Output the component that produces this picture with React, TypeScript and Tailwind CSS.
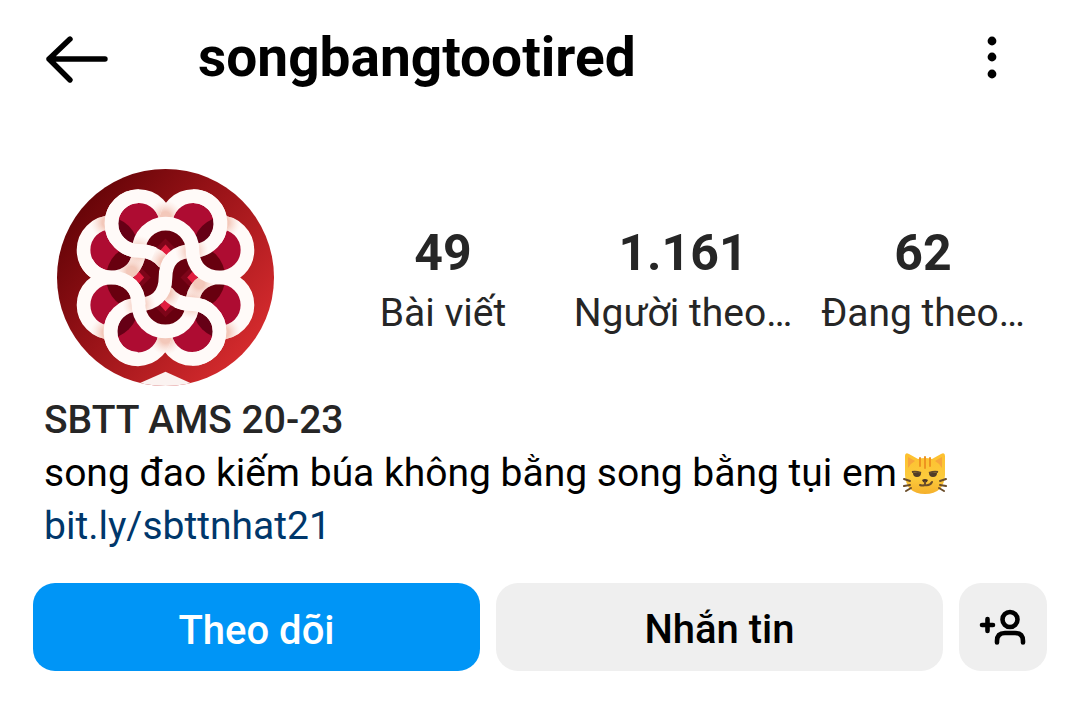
import { useId } from 'react';

type Point = [number, number];

const stats = [
  { value: '49', label: 'Bài viết', className: 'w-[192px]' },
  { value: '1.161', label: 'Người theo…', className: 'w-[216px]' },
  { value: '62', label: 'Đang theo…', className: 'w-[192px]' },
];

// outer lobe + S-curve pieces of the knot, the other half is the same rotated by 180deg
const SIDE = 'M349 190 A82 82 0 1 0 267 272 C298 272 325 283 345 310';
const SPINE =
  'M348 190 A82 82 0 1 1 430 272 C380 272 347 300 347 352 S314 433 264 433 A82 82 0 1 0 346 514';
const ARCH =
  'M184 517 A82 82 0 0 1 184 352 C235 352 267 318 267 271 A80.5 80.5 0 0 1 428 271 C428 318 459 352 510 352 A82 82 0 0 1 510 517';
const SIDE_OVER = 'M267 108 A82 82 0 0 0 267 272 C284 272 298 275 312 281';
const SPINE_OVER = 'M430 108 A82 82 0 0 1 497 237';
const HALF_TURN = 'rotate(180 347 352)';

function Strand({ d, shades = [], turned }: { d: string; shades?: Point[]; turned?: boolean }) {
  const id = useId();
  return (
    <g transform={turned ? HALF_TURN : undefined} fill="none" strokeWidth="41">
      <path d={d} stroke="#fffaf8" />
      {shades.map(([x, y], i) => (
        <g key={i}>
          <radialGradient id={`${id}${i}`} gradientUnits="userSpaceOnUse" cx={x} cy={y} r="50">
            <stop offset="0.3" stopColor="#f3c8ba" />
            <stop offset="1" stopColor="#fae3dc" stopOpacity="0" />
          </radialGradient>
          <path d={d} stroke={`url(#${id}${i})`} />
        </g>
      ))}
    </g>
  );
}

function KnotAvatar() {
  const lobes: Point[] = [
    [267, 190], [430, 190], [510, 270], [510, 435],
    [430, 515], [267, 515], [184, 435], [184, 270],
  ];
  const inner: Point[] = [[347, 271], [267, 352], [428, 352], [347, 435]];
  const overlaps: [Point, string][] = [
    [[165, 270], 'lobe0'],
    [[529, 270], 'lobe1'],
    [[529, 435], 'lobe4'],
    [[165, 435], 'lobe5'],
  ];
  return (
    <svg viewBox="22 27 650 650" className="size-[217px] shrink-0" role="img" aria-label="SBTT">
      <defs>
        <linearGradient id="backdrop" x1="0.1" y1="0.15" x2="0.9" y2="0.8">
          <stop offset="0" stopColor="#650407" />
          <stop offset="0.4" stopColor="#941116" />
          <stop offset="1" stopColor="#d32a2d" />
        </linearGradient>
        <clipPath id="round">
          <circle cx="347" cy="352" r="325" />
        </clipPath>
        {lobes.map(([x, y], i) => (
          <clipPath key={i} id={`lobe${i}`}>
            <circle cx={x} cy={y} r="80" />
          </clipPath>
        ))}
      </defs>
      <g clipPath="url(#round)">
        <rect x="22" y="27" width="650" height="650" fill="url(#backdrop)" />
        <path d="M262 672 L347 634 L430 672 V680 H262Z" fill="#fbf3f1" />
        {lobes.map(([x, y], i) => (
          <circle key={i} cx={x} cy={y} r="80" fill="#ae0c32" />
        ))}
        {overlaps.map(([[x, y], clip]) => (
          <circle key={clip} cx={x} cy={y} r="102" fill="#660016" clipPath={`url(#${clip})`} />
        ))}
        {inner.map(([x, y], i) => (
          <circle key={i} cx={x} cy={y} r="98" fill="#68000f" />
        ))}
        {inner.map(([x, y], i) => (
          <g key={i}>
            <path d={`M${x - 36} ${y} l36 -36 l36 36 l-36 36z`} fill="#7d0519" />
            <path d={`M${x - 16} ${y} l16 -18 l16 18 l-16 18z`} fill="#e01d3f" />
          </g>
        ))}

        <Strand d={SIDE} shades={[[347, 170], [346, 306]]} />
        <Strand d={SIDE} shades={[[347, 170], [346, 306]]} turned />
        <Strand d={SPINE} shades={[[347, 170], [426, 272], [268, 433], [347, 534]]} />
        <Strand d={ARCH} shades={[[172, 517], [522, 517], [266, 276], [246, 334]]} turned />
        <Strand d={ARCH} shades={[[172, 517], [522, 517], [266, 276], [246, 334]]} />
        {/* pieces that pass over the strands above */}
        <Strand d="M267 433 C267 386 235 352 184 352 A82 82 0 0 1 110 305" />
        <Strand d={SIDE_OVER} />
        <Strand d={SIDE_OVER} turned />
        <Strand d={SPINE_OVER} />
        <Strand d={SPINE_OVER} turned />
      </g>
    </svg>
  );
}

function CatEmoji() {
  return (
    <svg viewBox="0 0 46 42" className="h-[42px] w-[46px] shrink-0" role="img" aria-label="😼">
      <defs>
        <linearGradient id="fur" x1="0" y1="0" x2="0" y2="1">
          <stop offset="0" stopColor="#fdc02f" />
          <stop offset="0.6" stopColor="#fccb3c" />
          <stop offset="1" stopColor="#f5b02c" />
        </linearGradient>
      </defs>
      <path
        d="M3 3 Q3 -1 7 1 L16 6 Q23 4 30 6 L39 1 Q43 -1 43 3 L43 22 Q42 41 23 41 Q4 41 3 22Z"
        fill="url(#fur)"
      />
      <path d="M6 4 L13 8 Q9 10 6 15Z M40 4 L33 8 Q37 10 40 15Z" fill="#f7a53c" />
      <path d="M18 5 V13 M23 4 V15 M28 5 V13" stroke="#ee9420" strokeWidth="2" strokeLinecap="round" />
      <path d="M11 20 H19 Q19 24 15 24 Q11 24 11 20Z M27 20 H35 Q35 24 31 24 Q27 24 27 20Z" fill="#4f3c28" />
      <path d="M10 19 Q14 18 19 20 M36 19 Q32 18 27 20" fill="none" stroke="#5f482b" strokeWidth="2" />
      <path d="M20 27 Q23 25 26 27 Q25 30 23 30 Q21 30 20 27Z" fill="#4a3425" />
      <g fill="none" stroke="#6b4e2b" strokeLinecap="round">
        <path d="M23 29 V32 Q20 33 18 32 M23 32 Q28 33 30 29" strokeWidth="2" />
        <path
          d="M8 28 L2 26 M8 32 L2 33 M9 35 L4 38 M38 28 L44 26 M38 32 L44 33 M37 35 L42 38"
          strokeWidth="2"
        />
      </g>
    </svg>
  );
}

export default function App() {
  return (
    <main className="min-h-screen bg-white font-[Roboto,'Noto_Sans',sans-serif] text-black">
      <header className="flex h-[114px] items-center pr-[72px] pl-[44px]">
        <button type="button" aria-label="Quay lại" className="mr-[88px]">
          <svg viewBox="0 0 66 54" className="h-[54px] w-[66px]" fill="none" stroke="currentColor" strokeWidth="5.4" strokeLinecap="round" strokeLinejoin="round">
            <path d="M26 9 L5 29 L26 50 M5 29 H61" />
          </svg>
        </button>
        <h1 className="flex-1 text-[55px] leading-[64px] font-bold">songbangtootired</h1>
        <button type="button" aria-label="Tùy chọn">
          <svg viewBox="0 0 32 48" className="h-[48px] w-[32px]" fill="currentColor">
            <circle cx="16" cy="8" r="4.4" />
            <circle cx="16" cy="24" r="4.4" />
            <circle cx="16" cy="41" r="4.4" />
          </svg>
        </button>
      </header>

      <section className="mt-[55px] flex items-center pr-[61px] pl-[57px]">
        <KnotAvatar />
        <dl className="ml-[73px] flex flex-1 justify-between pt-[10px] text-center text-[#262626]">
          {stats.map((stat) => (
            <div key={stat.label} className={`flex flex-col-reverse items-center ${stat.className}`}>
              <dt className="text-[39px] leading-[60px] whitespace-nowrap">{stat.label}</dt>
              <dd className="text-[50px] leading-[60px] font-bold">{stat.value}</dd>
            </div>
          ))}
        </dl>
      </section>

      <section className="mt-[8px] px-[44px] text-[39px] leading-[53px]">
        <h2 className="font-medium text-[#262626]">SBTT AMS 20-23</h2>
        <p className="flex items-center gap-[5px] whitespace-nowrap">
          song đao kiếm búa không bằng song bằng tụi em
          <CatEmoji />
        </p>
        <a href="https://bit.ly/sbttnhat21" className="block text-[#00376b]">
          bit.ly/sbttnhat21
        </a>
      </section>

      <div className="mt-[30px] flex gap-[16px] px-[33px] text-[40px] font-medium">
        <button type="button" className="h-[88px] flex-1 rounded-[22px] bg-[#0095f6] pt-2 text-white">
          Theo dõi
        </button>
        <button type="button" className="h-[88px] flex-1 rounded-[22px] bg-[#efefef] pt-1.5">
          Nhắn tin
        </button>
        <button
          type="button"
          aria-label="Gợi ý cho bạn"
          className="flex size-[88px] items-center justify-center rounded-[22px] bg-[#efefef]"
        >
          <svg viewBox="0 0 48 40" className="h-[40px] w-[48px]" fill="none" stroke="currentColor" strokeWidth="4.6" strokeLinecap="round">
            <path d="M3 18 H14 M8.5 12 V24" />
            <circle cx="31" cy="12.5" r="7.5" />
            <path d="M18 35.5 V34 Q18 26 26 26 H36 Q44 26 44 34 V35.5" />
          </svg>
        </button>
      </div>
    </main>
  );
}
